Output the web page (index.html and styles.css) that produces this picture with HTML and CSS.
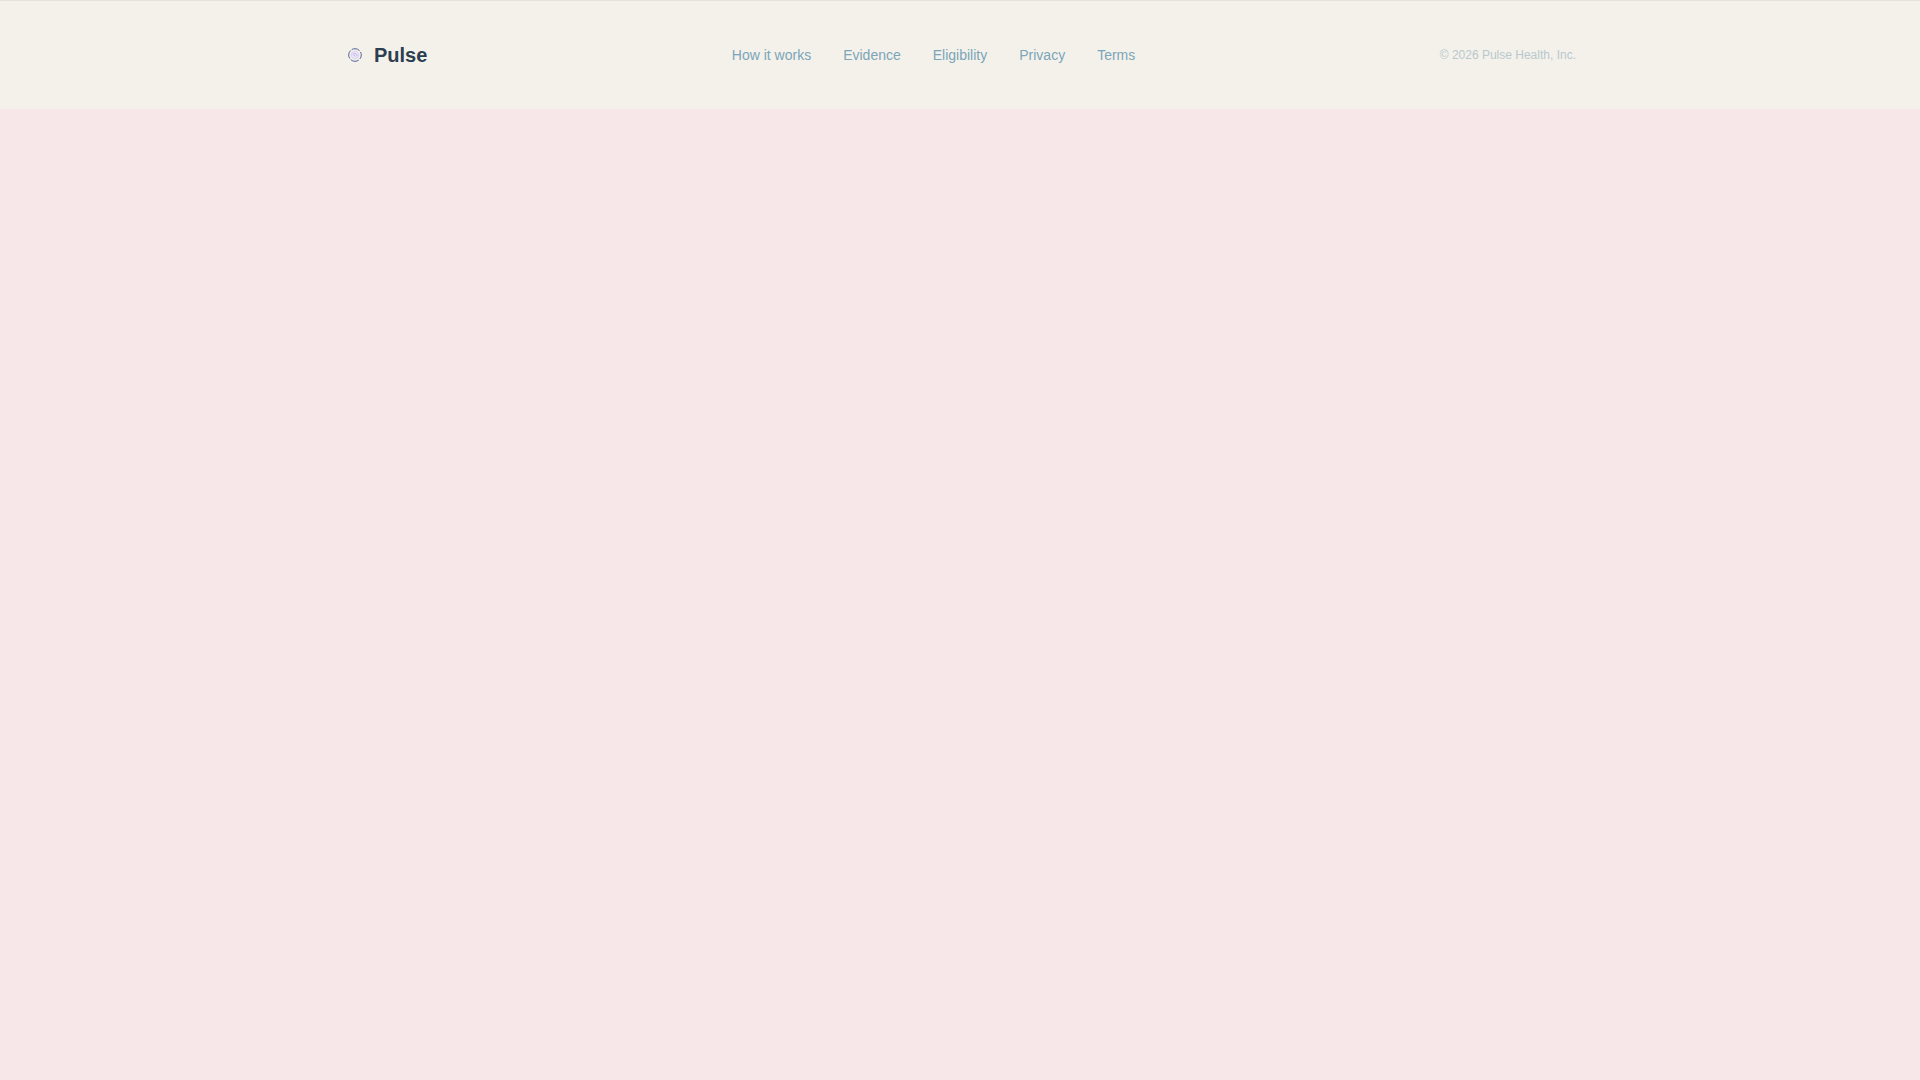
FILE: index.html
```html
<!DOCTYPE html>
<html lang="en">
    <head>
        <meta charset="UTF-8" />
        <meta name="viewport" content="width=device-width, initial-scale=1.0" />
        <title>Pulse</title>
        <link rel="stylesheet" href="styles.css">
    </head>
    <body>
        <footer class="footer">
            <div class="footer-inner">
                <div class="brand">
                    <svg class="brand-mark" viewBox="0 0 22 22" fill="none" aria-hidden="true">
                        <circle cx="11" cy="11" r="6.3" stroke="#56659c" stroke-width="1" stroke-dasharray="8.4 1.5" stroke-dashoffset="4.2" />
                        <circle cx="11" cy="11" r="3.8" fill="#ebe7f5" stroke="#d3cbf2" stroke-width="0.8" />
                        <path d="M8.6 10.2a3 3 0 0 1 4.8 2M9.6 11.6a1.6 1.6 0 0 1 2 1" stroke="#b5a9ea" stroke-width="0.8" />
                    </svg>
                    <span>Pulse</span>
                </div>
                <nav class="footer-links">
                    <a href="#how">How it works</a>
                    <a href="#evidence">Evidence</a>
                    <a href="#eligibility">Eligibility</a>
                    <a href="#privacy">Privacy</a>
                    <a href="#terms">Terms</a>
                </nav>
                <p class="copyright">© 2026 Pulse Health, Inc.</p>
            </div>
        </footer>
    </body>
</html>
```

FILE: styles.css
```css
body {
    margin: 0;
    font-family: 'Liberation Sans', Arial, sans-serif;
    background-color: #f7e7e8;
}
.footer {
    padding: 40px 0;
    background-color: #f4f1ea;
    border-top: 1px solid #e3e2df;
}
.footer-inner {
    display: flex;
    justify-content: space-between;
    align-items: center;
    max-width: 1232px;
    margin: 0 auto;
    padding: 0 24px;
}
.brand {
    display: flex;
    align-items: center;
    gap: 8px;
    font-size: 20px;
    font-weight: bold;
    line-height: 28px;
    color: #2c3e50;
}
.brand-mark {
    width: 22px;
    height: 22px;
}
.footer-links {
    display: flex;
    gap: 32px;
    font-size: 14px;
}
.footer-links a {
    color: #7ba5b9;
    text-decoration: none;
}
.footer-links a:hover {
    color: #2c3e50;
}
.copyright {
    margin: 0;
    font-size: 12px;
    color: #b7c8cf;
}
```
